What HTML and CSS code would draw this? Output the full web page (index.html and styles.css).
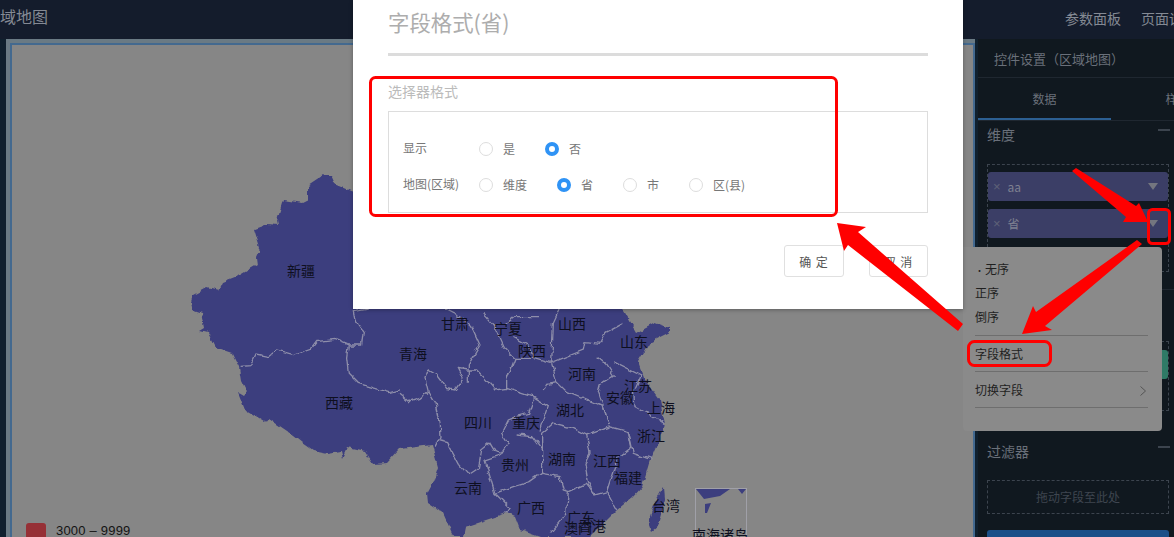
FILE: index.html
```html
<!DOCTYPE html>
<html lang="zh">
<head>
    <meta charset="UTF-8">
    <title>区域地图</title>
    <link rel="stylesheet" href="styles.css">
</head>
<body>
    <header class="topbar">
        <span class="page-name">域地图</span>
        <nav class="top-links">
            <span>参数面板</span>
            <span>页面设置</span>
        </nav>
    </header>

    <main class="workspace">
        <section class="canvas">
            <div class="canvas-inner">
                <svg class="map" width="1174" height="537" viewBox="0 0 1174 537">
                    <defs>
                        <filter id="rough" x="0" y="0" width="100%" height="100%" filterUnits="userSpaceOnUse" primitiveUnits="userSpaceOnUse" color-interpolation-filters="sRGB">
                            <feTurbulence type="fractalNoise" baseFrequency="0.11" numOctaves="2" seed="4"/>
                            <feDisplacementMap in="SourceGraphic" scale="6" xChannelSelector="R" yChannelSelector="G"/>
                        </filter>
                    </defs>
                    <g filter="url(#rough)">
                        <!-- 轮廓 -->
                        <path class="land" d="M323 175 L330 175 334 184 353 192 640 290 623 309 637 333 655 323 670 328 670 332 650 342 638 362 643 377 660 400 665 425 650 460 642 487 633 497 617 510 600 527 590 537 540 537 520 530 515 517 507 513 480 522 465 527 463 537 455 537 452 533 443 513 428 503 427 493 433 482 438 467 432 445 400 449 387 463 373 464 365 452 347 448 342 459 340 451 328 453 313 450 303 443 293 435 268 418 265 422 245 410 238 392 243 395 247 390 242 380 240 367 233 353 215 347 208 333 200 331 205 328 202 313 193 310 191 302 193 295 208 287 218 290 222 282 240 275 257 265 256 257 260 248 254 229 268 224 278 225 277 220 283 200 302 203 308 200 308 185 Z"/>
                        <path class="land" d="M648 522 L655 502 664 487 665 500 658 525 651 531 Z"/>

                        <!-- 省界 -->
                        <g class="borders" transform="translate(0 260) scale(.3333)">
                            <path d="M725 322 L750 320 768 282 805 290 830 270 880 284 935 265 950 245 1005 238 1045 255 1040 295 1045 340 1075 370 1170 398 1200 390"/>
                            <path d="M1045 255 L1085 255 1090 215 1065 180 1060 155 1100 148"/>
                        </g>
                        <g class="borders" transform="translate(400 300) scale(.3333)">
                            <path d="M0 280 L30 305 60 295 85 275 105 310 118 370 120 410 105 440"/>
                            <path d="M120 420 L140 425 175 490 205 525 235 505 245 450 270 430 285 455 305 460 325 430 305 400 325 360 350 350 385 340 400 295"/>
                            <path d="M85 275 L75 235 85 210 110 225 140 265 165 270 190 235 175 205 200 210 230 210 255 235 285 270 320 265 395 290 445 320 420 395"/>
                            <path d="M205 245 L205 195 240 135 215 80 190 55 135 27"/>
                            <path d="M250 40 L280 75 310 140 345 175 320 240 320 265"/>
                            <path d="M345 175 L400 175 450 190 550 150 555 125 600 130 615 100 670 70"/>
                            <path d="M340 110 L385 135 400 175"/>
                            <path d="M320 70 L345 50 420 50"/>
                            <path d="M455 190 L460 70 480 27"/>
                            <path d="M455 190 L470 245 440 250 430 270 M470 245 L500 275 560 300 610 320 630 380 685 395 700 460 755 480"/>
                            <path d="M590 170 L620 195 640 225 600 255 595 275 610 320"/>
                            <path d="M640 185 L720 225 700 270 705 320 750 345 795 375"/>
                            <path d="M610 320 L630 380 560 405 520 385 460 370 425 400 425 520 390 545 340 560 285 580 255 480 300 465"/>
                            <path d="M350 405 L395 410 425 450"/>
                            <path d="M560 405 L570 460 555 490 565 545 585 585 620 575 650 630"/>
                            <path d="M685 395 L695 445 650 480 620 575"/>
                            <path d="M425 520 L480 530 490 570 505 575 500 640 450 700"/>
                            <path d="M505 575 L560 550 585 585"/>
                            <path d="M285 580 L330 625 320 640"/>
                        </g>
                    </g>

                    <!-- 南海诸岛 -->
                    <rect class="inset" x="695.5" y="488.5" width="51" height="60"/>
                    <path class="land" d="M696 489 L730 489 720 496 704 499 Z M705 504 L711 503 707 513 705 513 Z M738 489 L746 489 742 494 Z"/>

                    <g class="region-names">
                        <text x="301" y="276">新疆</text>
                        <text x="413" y="359">青海</text>
                        <text x="339" y="408">西藏</text>
                        <text x="455" y="329">甘肃</text>
                        <text x="508" y="334">宁夏</text>
                        <text x="572" y="329">山西</text>
                        <text x="634" y="347">山东</text>
                        <text x="532" y="356">陕西</text>
                        <text x="582" y="379">河南</text>
                        <text x="638" y="391">江苏</text>
                        <text x="620" y="403">安徽</text>
                        <text x="661" y="413">上海</text>
                        <text x="570" y="415">湖北</text>
                        <text x="478" y="428">四川</text>
                        <text x="526" y="428">重庆</text>
                        <text x="651" y="441">浙江</text>
                        <text x="562" y="464">湖南</text>
                        <text x="515" y="470">贵州</text>
                        <text x="607" y="466">江西</text>
                        <text x="628" y="483">福建</text>
                        <text x="468" y="493">云南</text>
                        <text x="531" y="513">广西</text>
                        <text x="666" y="511">台湾</text>
                        <text x="581" y="523">广东</text>
                        <text x="578" y="533">澳门</text>
                        <text x="592" y="531">香港</text>
                        <text x="720" y="540">南海诸岛</text>
                    </g>
                </svg>
                <div class="legend">
                    <span class="legend-swatch"></span>
                    <span class="legend-text">3000 – 9999</span>
                </div>
            </div>
        </section>

        <aside class="panel">
            <div class="panel-title">控件设置（区域地图）</div>
            <div class="tabs">
                <span class="tab active">数据</span>
                <span class="tab">样式</span>
            </div>
            <div class="group-head dim-head"><span>维度</span><i class="minus"></i></div>
            <div class="drop-zone">
                <div class="field"><span class="field-x">×</span><span>aa</span><i class="caret"></i></div>
                <div class="field"><span class="field-x">×</span><span>省</span><i class="caret"></i></div>
            </div>
            <div class="divider"></div>
            <div class="group-head measure-head"><i class="minus"></i></div>
            <div class="drop-zone measure-zone">
                <div class="field green"></div>
            </div>
            <div class="group-head filter-head"><span>过滤器</span><i class="minus"></i></div>
            <div class="drop-zone empty">拖动字段至此处</div>
            <div class="apply-btn"></div>
        </aside>
    </main>

    <!-- 字段菜单 -->
    <div class="field-menu">
        <div class="menu-item"><span class="dot">•</span>无序</div>
        <div class="menu-item">正序</div>
        <div class="menu-item">倒序</div>
        <div class="menu-item ruled first-ruled">字段格式</div>
        <div class="menu-item ruled">切换字段
            <svg class="chevron" width="8" height="12" viewBox="0 0 8 12"><path d="M1.5 1.5 L6.5 6 1.5 10.5"/></svg>
        </div>
        <div class="menu-rule"></div>
    </div>

    <!-- 弹窗 -->
    <div class="modal">
        <h2 class="modal-title">字段格式(省)</h2>
        <div class="modal-line"></div>
        <div class="form-label">选择器格式</div>
        <div class="form-box">
            <div class="form-row">
                <span class="row-name">显示</span>
                <label class="radio-item w-66"><i class="radio"></i>是</label>
                <label class="radio-item"><i class="radio on"></i>否</label>
            </div>
            <div class="form-row">
                <span class="row-name">地图(区域)</span>
                <label class="radio-item w-78"><i class="radio"></i>维度</label>
                <label class="radio-item w-66"><i class="radio on"></i>省</label>
                <label class="radio-item w-66"><i class="radio"></i>市</label>
                <label class="radio-item"><i class="radio"></i>区(县)</label>
            </div>
        </div>
        <div class="modal-btns">
            <button class="btn">确 定</button>
            <button class="btn">取 消</button>
        </div>
    </div>

    <!-- 红色标注 -->
    <svg class="marks" width="1174" height="537" viewBox="0 0 1174 537">
        <rect class="mark-box" x="370.5" y="77.5" width="466" height="138" rx="5"/>
        <rect class="mark-box" x="1148.5" y="209.5" width="21" height="34" rx="4"/>
        <rect class="mark-box" x="968.5" y="341.5" width="82" height="24" rx="6"/>
        <path class="mark-arrow" d="M1072 171 L1076 168 1136 206 1139 203 1148 222 1123 222 1126 217 Z"/>
        <path class="mark-arrow" d="M1137 240 L1142 244 1045 326 1052 330 1022 334 1033 306 1036 312 Z"/>
        <path class="mark-arrow" d="M837 223 L866 227 858 232 963 324 958 331 848 245 844 251 Z"/>
    </svg>
</body>
</html>
```

FILE: styles.css
```css
* {
    margin: 0;
    padding: 0;
    box-sizing: border-box;
    font-family: "Noto Sans CJK SC", "Liberation Sans", sans-serif;
}

body {
    width: 1174px;
    height: 537px;
    overflow: hidden;
    background: #10202e;
    position: relative;
}

.topbar {
    height: 39px;
    background: #141c2c;
    display: flex;
    align-items: center;
    justify-content: space-between;
    color: #848a94;
    font-size: 14px;
}

.page-name {
    font-size: 16px;
    margin-top: -7px;
}

.top-links {
    display: flex;
    gap: 20px;
    width: 109px;
    margin-top: -3px;
    white-space: nowrap;
    overflow: hidden;
}

.workspace {
    display: flex;
    height: 498px;
}

.canvas {
    width: 978px;
    padding: 0 3px 0 6px;
    background: #10202e;
}

.canvas-inner {
    height: 100%;
    background: #868686;
    border: solid #6a7a84;
    border-width: 4px 0 0 4px;
    box-shadow: inset 2px 2px 0 #43698f, inset -2px 0 0 #43698f;
    position: relative;
    overflow: hidden;
}

.map {
    position: absolute;
    left: -10px;
    top: -43px;
}

.land {
    fill: #3c3e7e;
}

.borders path {
    fill: none;
    stroke: #8e8eaa;
    stroke-width: 3.9;
}

.inset {
    fill: none;
    stroke: #a0a0a8;
    stroke-width: 1;
}

.region-names text {
    font-size: 14px;
    fill: #0e0f20;
    text-anchor: middle;
}

.legend {
    position: absolute;
    left: 16px;
    top: 480px;
    display: flex;
    gap: 10px;
    font-size: 13px;
    color: #141414;
}

.legend-text {
    font-family: "Liberation Sans", sans-serif;
    letter-spacing: 0.2px;
}

.legend-swatch {
    width: 20px;
    height: 16px;
    border-radius: 3px;
    background: #963036;
}

.panel {
    width: 196px;
    background: #10181f;
    color: #6a707a;
    font-size: 14px;
}

.panel-title {
    height: 39px;
    padding: 10px 0 0 16px;
    font-size: 13px;
    border-bottom: 1px solid #1f2730;
    white-space: nowrap;
}

.tabs {
    display: flex;
    height: 43px;
    border-bottom: 1px solid #1f2730;
    font-size: 12px;
    overflow: hidden;
}

.tab {
    width: 133px;
    flex: none;
    text-align: center;
    padding-top: 12px;
}

.tab.active {
    border-bottom: 2px solid #2c5f92;
}

.group-head {
    display: flex;
    justify-content: space-between;
    align-items: center;
    padding: 0 4px 0 9px;
}

.dim-head {
    height: 25px;
    margin-bottom: 18px;
}

.minus {
    width: 12px;
    height: 2px;
    background: #3c444e;
    margin-top: -8px;
}

.drop-zone {
    margin-left: 9px;
    width: 182px;
    border: 1px dashed #3c444e;
    padding: 7px 0 0;
    height: 108px;
}

.field {
    width: 180px;
    height: 29px;
    margin-bottom: 8px;
    background: #3b3e66;
    border-radius: 3px;
    display: flex;
    align-items: center;
    gap: 7px;
    padding-left: 5px;
    font-size: 12px;
    color: #7e8090;
}

.field-x {
    color: #5f6278;
    font-size: 13px;
    font-family: "Liberation Sans", sans-serif;
}

.caret {
    margin-left: auto;
    margin-right: 10px;
    border: 5px solid transparent;
    border-top: 7px solid #74767f;
    border-bottom: 0;
    width: 0;
    height: 0;
}

.divider {
    height: 1px;
    background: #1f2730;
    margin-top: 17px;
}

.measure-head {
    height: 51px;
    padding-bottom: 8px;
}

.measure-zone {
    height: 70px;
    padding-top: 8px;
}

.field.green {
    background: #2f7a66;
}

.filter-head {
    height: 36px;
    margin-top: 22px;
    font-size: 14px;
}

.drop-zone.empty {
    height: 34px;
    margin-top: 11px;
    padding: 0;
    text-align: center;
    font-size: 12px;
    line-height: 32px;
    color: #3f4650;
}

.apply-btn {
    margin: 16px 0 0 9px;
    width: 182px;
    height: 30px;
    border-radius: 3px;
    background: #1b4f88;
}

.field-menu {
    position: absolute;
    left: 963px;
    top: 247px;
    width: 199px;
    height: 184px;
    background: #8a8a8a;
    border-radius: 0 4px 4px 4px;
    padding: 10px 14px 0 12px;
    font-size: 12px;
    color: #1f1f1f;
}

.menu-item {
    height: 24px;
    line-height: 24px;
    position: relative;
}

.dot {
    font-size: 9px;
    margin-right: 1px;
}

.menu-item.ruled {
    height: 36px;
    line-height: 36px;
    border-top: 1px solid #6e6e6e;
}

.menu-item.first-ruled {
    margin-top: 6px;
}

.menu-rule {
    border-top: 1px solid #6e6e6e;
}

.chevron {
    position: absolute;
    right: 1px;
    top: 13px;
}

.chevron path {
    fill: none;
    stroke: #555;
}

.modal {
    position: absolute;
    left: 353px;
    top: 0;
    width: 610px;
    height: 309px;
    background: #fff;
    padding: 0 35px;
    box-shadow: 0 1px 4px rgba(0, 0, 0, 0.3);
}

.modal-title {
    height: 53px;
    line-height: 43px;
    font-size: 21.4px;
    font-weight: 400;
    color: #adadad;
}

.modal-line {
    height: 3px;
    background: #dcdcdc;
}

.form-label {
    margin-top: 26px;
    height: 29px;
    font-size: 14px;
    line-height: 18px;
    color: #bbb;
}

.form-box {
    height: 102px;
    border: 1px solid #ddd;
    padding: 19px 14px 0;
}

.form-row {
    height: 36px;
    display: flex;
    align-items: center;
    font-size: 12px;
    color: #777;
}

.row-name {
    width: 76px;
    margin-top: -4px;
    flex: none;
}

.radio-item {
    display: flex;
    align-items: center;
    gap: 10px;
    line-height: 16px;
}

.w-66 {
    width: 66px;
}

.w-78 {
    width: 78px;
}

.radio {
    width: 14px;
    height: 14px;
    border: 1px solid #ddd;
    border-radius: 50%;
    flex: none;
}

.radio.on {
    border: 4.5px solid #2f93f5;
    background: #fff;
}

.modal-btns {
    margin-top: 32px;
    display: flex;
    justify-content: flex-end;
    gap: 25px;
}

.btn {
    width: 60px;
    height: 32px;
    background: #fff;
    border: 1px solid #e0e0e0;
    border-radius: 3px;
    color: #555;
    font-size: 12px;
    letter-spacing: 1px;
}

.btn + .btn {
    width: 59px;
}

.marks {
    position: absolute;
    left: 0;
    top: 0;
}

.mark-box {
    fill: none;
    stroke: #f00;
    stroke-width: 3;
}

.mark-arrow {
    fill: #f00;
}
```
